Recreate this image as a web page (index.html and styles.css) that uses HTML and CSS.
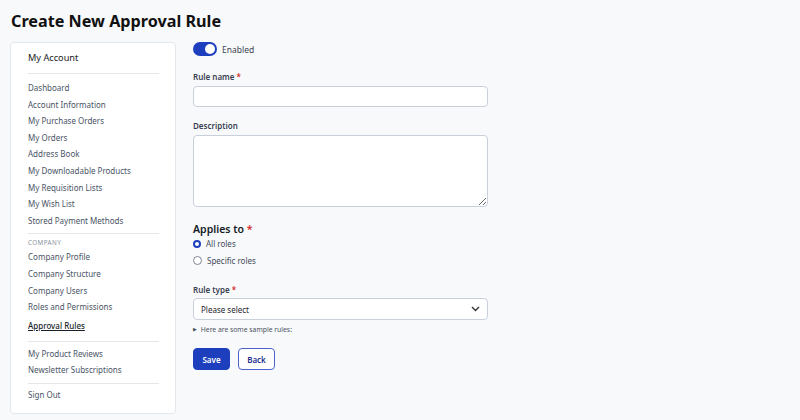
FILE: index.html
```html
<!DOCTYPE html>
<html lang="en">
<head>
    <meta charset="UTF-8">
    <meta name="viewport" content="width=device-width, initial-scale=1.0">
    <title>Create New Approval Rule</title>
    <link rel="stylesheet" href="styles.css">
</head>
<body>
    <h1 class="page-title">Create New Approval Rule</h1>

    <div class="layout">
        <aside class="sidebar">
            <div class="sidebar-title">My Account</div>
            <ul class="nav nav-first">
                <li><a href="#">Dashboard</a></li>
                <li><a href="#">Account Information</a></li>
                <li><a href="#">My Purchase Orders</a></li>
                <li><a href="#">My Orders</a></li>
                <li><a href="#">Address Book</a></li>
                <li><a href="#">My Downloadable Products</a></li>
                <li><a href="#">My Requisition Lists</a></li>
                <li><a href="#">My Wish List</a></li>
                <li><a href="#">Stored Payment Methods</a></li>
            </ul>
            <div class="nav-group">Company</div>
            <ul class="nav nav-company">
                <li><a href="#">Company Profile</a></li>
                <li><a href="#">Company Structure</a></li>
                <li><a href="#">Company Users</a></li>
                <li><a href="#">Roles and Permissions</a></li>
                <li><a href="#" class="active">Approval Rules</a></li>
            </ul>
            <ul class="nav">
                <li><a href="#">My Product Reviews</a></li>
                <li><a href="#">Newsletter Subscriptions</a></li>
            </ul>
            <ul class="nav nav-last">
                <li><a href="#">Sign Out</a></li>
            </ul>
        </aside>

        <form class="rule-form">
            <label class="toggle-row">
                <span class="toggle"><span class="knob"></span></span>
                <span class="toggle-text">Enabled</span>
            </label>

            <div class="field">
                <label class="label">Rule name <span class="req">*</span></label>
                <input type="text" class="input">
            </div>

            <div class="field">
                <label class="label">Description</label>
                <textarea class="input textarea"></textarea>
            </div>

            <div class="field applies">
                <div class="legend">Applies to <span class="req">*</span></div>
                <label class="radio-row"><span class="radio checked"></span>All roles</label>
                <label class="radio-row"><span class="radio"></span>Specific roles</label>
            </div>

            <div class="field">
                <label class="label">Rule type <span class="req">*</span></label>
                <div class="select">
                    <span>Please select</span>
                    <svg width="9" height="6" viewBox="0 0 9 6"><path d="M1 1l3.5 3.5L8 1" fill="none" stroke="#333" stroke-width="1.4"/></svg>
                </div>
                <div class="samples"><span class="tri">&#9654;</span> Here are some sample rules:</div>
            </div>

            <div class="actions">
                <button type="button" class="btn btn-primary">Save</button>
                <button type="button" class="btn btn-secondary">Back</button>
            </div>
        </form>
    </div>
</body>
</html>
```

FILE: styles.css
```css
body {
    font-family: "Noto Sans", "Open Sans", sans-serif;
    margin: 0;
    padding: 0 10px;
    background-color: #f8f9fb;
    color: #1f2430;
}
.page-title {
    font-size: 16.2px;
    font-weight: 700;
    color: #111;
    margin: 0;
    padding: 10px 1px 0;
    line-height: 22px;
}
.layout {
    display: flex;
    gap: 17px;
    margin-top: 10px;
}
.sidebar {
    width: 131px;
    flex: none;
    background: #fff;
    border: 1px solid #e3e6eb;
    border-radius: 4px;
    padding: 7px 16px 9px 17px;
}
.sidebar-title {
    font-size: 9.2px;
    color: #222;
    line-height: 16px;
    padding-bottom: 7px;
    border-bottom: 1px solid #e5e7eb;
}
.nav {
    list-style: none;
    margin: 0;
    padding: 4px 0;
    border-bottom: 1px solid #e5e7eb;
    font-size: 8px;
}
.nav li {
    line-height: 16.6px;
}
.nav a {
    color: #4a5466;
    text-decoration: none;
}
.nav a.active {
    color: #1a1f2b;
    text-decoration: underline;
    font-weight: 500;
}
.nav-first {
    padding-top: 6px;
}
.nav-group {
    font-size: 6.3px;
    text-transform: uppercase;
    letter-spacing: 0.4px;
    color: #8a92a0;
    padding-top: 3px;
    line-height: 11px;
}
.nav-company {
    padding-top: 1px;
    padding-bottom: 5px;
}
.nav-company li:last-child {
    line-height: 20px;
}
.nav-last {
    border-bottom: none;
    padding-top: 3px;
    padding-bottom: 0;
}
.rule-form {
    width: 295px;
}
.toggle-row {
    display: flex;
    align-items: center;
    gap: 5px;
    height: 14px;
    margin-bottom: 15px;
}
.toggle {
    width: 24px;
    height: 14px;
    border-radius: 7px;
    background: #1e3fbd;
    position: relative;
}
.knob {
    position: absolute;
    right: 2px;
    top: 2px;
    width: 10px;
    height: 10px;
    border-radius: 50%;
    background: #fff;
}
.toggle-text {
    font-size: 8.5px;
    color: #3c4452;
}
.field {
    margin-bottom: 13px;
}
.label {
    display: block;
    font-size: 8px;
    font-weight: 600;
    color: #3a4252;
    line-height: 12px;
    margin-bottom: 3px;
}
.req {
    color: #d42a2a;
}
.input {
    display: block;
    box-sizing: border-box;
    width: 295px;
    height: 21px;
    border: 1px solid #c9cfdb;
    border-radius: 4px;
    background: #fff;
    font-family: inherit;
}
.textarea {
    height: 72px;
    resize: vertical;
}
.applies {
    margin-top: 15px;
    margin-bottom: 15px;
}
.legend {
    font-size: 10.5px;
    font-weight: 600;
    color: #151a24;
    line-height: 14px;
}
.radio-row {
    display: flex;
    align-items: center;
    gap: 5px;
    font-size: 8px;
    color: #434b59;
    line-height: 16.5px;
}
.radio {
    width: 7px;
    height: 7px;
    border-radius: 50%;
    border: 1px solid #7d8594;
    background: #fff;
}
.radio.checked {
    border: 2.5px solid #1e3fbd;
    width: 4px;
    height: 4px;
}
.select {
    box-sizing: border-box;
    width: 295px;
    height: 22px;
    margin-top: -1px;
    border: 1px solid #c9cfdb;
    border-radius: 4px;
    background: #fff;
    display: flex;
    align-items: center;
    justify-content: space-between;
    padding: 0 7px 0 7px;
    font-size: 8px;
    color: #1f2430;
}
.samples {
    font-size: 6.8px;
    color: #4a5262;
    margin-top: 4px;
    line-height: 10px;
}
.tri {
    font-size: 5px;
    vertical-align: 1px;
    margin-right: 2px;
}
.actions {
    display: flex;
    gap: 8px;
}
.btn {
    font-family: inherit;
    font-size: 8px;
    font-weight: 600;
    width: 37px;
    height: 22px;
    padding: 0;
    border-radius: 4px;
    cursor: pointer;
}
.btn-primary {
    background: #1e3fbd;
    color: #fff;
    border: 1px solid #1e3fbd;
}
.btn-secondary {
    background: #fff;
    color: #1e2f8f;
    border: 1px solid #4a62c9;
}
```
